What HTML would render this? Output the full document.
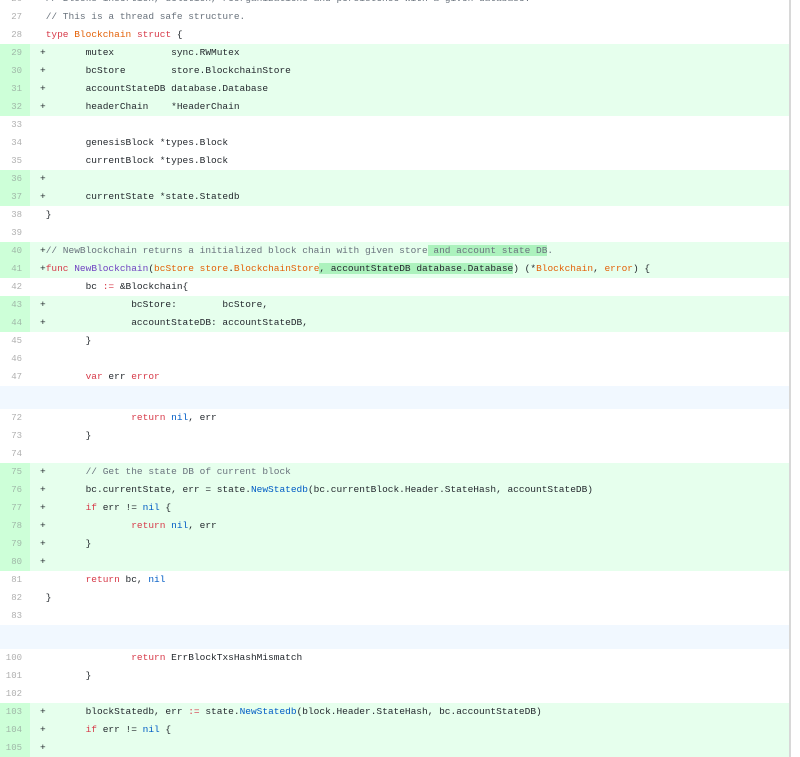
<!DOCTYPE html>
<html><head><meta charset="utf-8"><style>
body{margin:0;width:800px;height:741px;overflow:hidden;background:#fff;font-family:"Liberation Mono",monospace;font-size:9.5px;color:#24292e}
#w{position:absolute;left:0;top:-10px;width:789px;border-right:2px solid #d8d8d8}
.r{height:18px;line-height:18px;position:relative;white-space:pre}
.n{position:absolute;left:0;width:30px;height:18px;text-align:right;padding-right:8px;box-sizing:border-box;color:#b0b0b0;font-size:9px}
.c{position:absolute;left:40px}
.a{background:#e6ffed}.a .n{background:#cdffd8;color:#a0b8a8}
.h{height:23px;background:#f1f8ff}
.k{color:#d73a49}.f{color:#6f42c1}.t{color:#e36209}.m{color:#6a737d}.b{color:#005cc5}
.x{background:#acf2bd}
</style></head><body><div id="w">
<div class="r"><span class="n">26</span><span class="c m"> // Blocks insertion, deletion, reorganizations and persistence with a given database.</span></div>
<div class="r"><span class="n">27</span><span class="c m"> // This is a thread safe structure.</span></div>
<div class="r"><span class="n">28</span><span class="c"> <span class="k">type</span> <span class="t">Blockchain</span> <span class="k">struct</span> {</span></div>
<div class="r a"><span class="n">29</span><span class="c">+       mutex          sync.RWMutex</span></div>
<div class="r a"><span class="n">30</span><span class="c">+       bcStore        store.BlockchainStore</span></div>
<div class="r a"><span class="n">31</span><span class="c">+       accountStateDB database.Database</span></div>
<div class="r a"><span class="n">32</span><span class="c">+       headerChain    *HeaderChain</span></div>
<div class="r"><span class="n">33</span><span class="c"> </span></div>
<div class="r"><span class="n">34</span><span class="c">        genesisBlock *types.Block</span></div>
<div class="r"><span class="n">35</span><span class="c">        currentBlock *types.Block</span></div>
<div class="r a"><span class="n">36</span><span class="c">+</span></div>
<div class="r a"><span class="n">37</span><span class="c">+       currentState *state.Statedb</span></div>
<div class="r"><span class="n">38</span><span class="c"> }</span></div>
<div class="r"><span class="n">39</span><span class="c"> </span></div>
<div class="r a"><span class="n">40</span><span class="c">+<span class="m">// NewBlockchain returns a initialized block chain with given store<span class="x"> and account state DB</span>.</span></span></div>
<div class="r a"><span class="n">41</span><span class="c">+<span class="k">func</span> <span class="f">NewBlockchain</span>(<span class="t">bcStore</span> <span class="t">store</span>.<span class="t">BlockchainStore</span><span class="x">, accountStateDB database.Database</span>) (*<span class="t">Blockchain</span>, <span class="t">error</span>) {</span></div>
<div class="r"><span class="n">42</span><span class="c">        bc <span class="k">:=</span> &amp;Blockchain{</span></div>
<div class="r a"><span class="n">43</span><span class="c">+               bcStore:        bcStore,</span></div>
<div class="r a"><span class="n">44</span><span class="c">+               accountStateDB: accountStateDB,</span></div>
<div class="r"><span class="n">45</span><span class="c">        }</span></div>
<div class="r"><span class="n">46</span><span class="c"> </span></div>
<div class="r"><span class="n">47</span><span class="c">        <span class="k">var</span> err <span class="k">error</span></span></div>
<div class="h"></div>
<div class="r"><span class="n">72</span><span class="c">                <span class="k">return</span> <span class="b">nil</span>, err</span></div>
<div class="r"><span class="n">73</span><span class="c">        }</span></div>
<div class="r"><span class="n">74</span><span class="c"> </span></div>
<div class="r a"><span class="n">75</span><span class="c">+       <span class="m">// Get the state DB of current block</span></span></div>
<div class="r a"><span class="n">76</span><span class="c">+       bc.currentState, err = state.<span class="b">NewStatedb</span>(bc.currentBlock.Header.StateHash, accountStateDB)</span></div>
<div class="r a"><span class="n">77</span><span class="c">+       <span class="k">if</span> err != <span class="b">nil</span> {</span></div>
<div class="r a"><span class="n">78</span><span class="c">+               <span class="k">return</span> <span class="b">nil</span>, err</span></div>
<div class="r a"><span class="n">79</span><span class="c">+       }</span></div>
<div class="r a"><span class="n">80</span><span class="c">+</span></div>
<div class="r"><span class="n">81</span><span class="c">        <span class="k">return</span> bc, <span class="b">nil</span></span></div>
<div class="r"><span class="n">82</span><span class="c"> }</span></div>
<div class="r"><span class="n">83</span><span class="c"> </span></div>
<div class="h" style="height:24px"></div>
<div class="r"><span class="n">100</span><span class="c">                <span class="k">return</span> ErrBlockTxsHashMismatch</span></div>
<div class="r"><span class="n">101</span><span class="c">        }</span></div>
<div class="r"><span class="n">102</span><span class="c"> </span></div>
<div class="r a"><span class="n">103</span><span class="c">+       blockStatedb, err <span class="k">:=</span> state.<span class="b">NewStatedb</span>(block.Header.StateHash, bc.accountStateDB)</span></div>
<div class="r a"><span class="n">104</span><span class="c">+       <span class="k">if</span> err != <span class="b">nil</span> {</span></div>
<div class="r a"><span class="n">105</span><span class="c">+</span></div>
</div></body></html>
